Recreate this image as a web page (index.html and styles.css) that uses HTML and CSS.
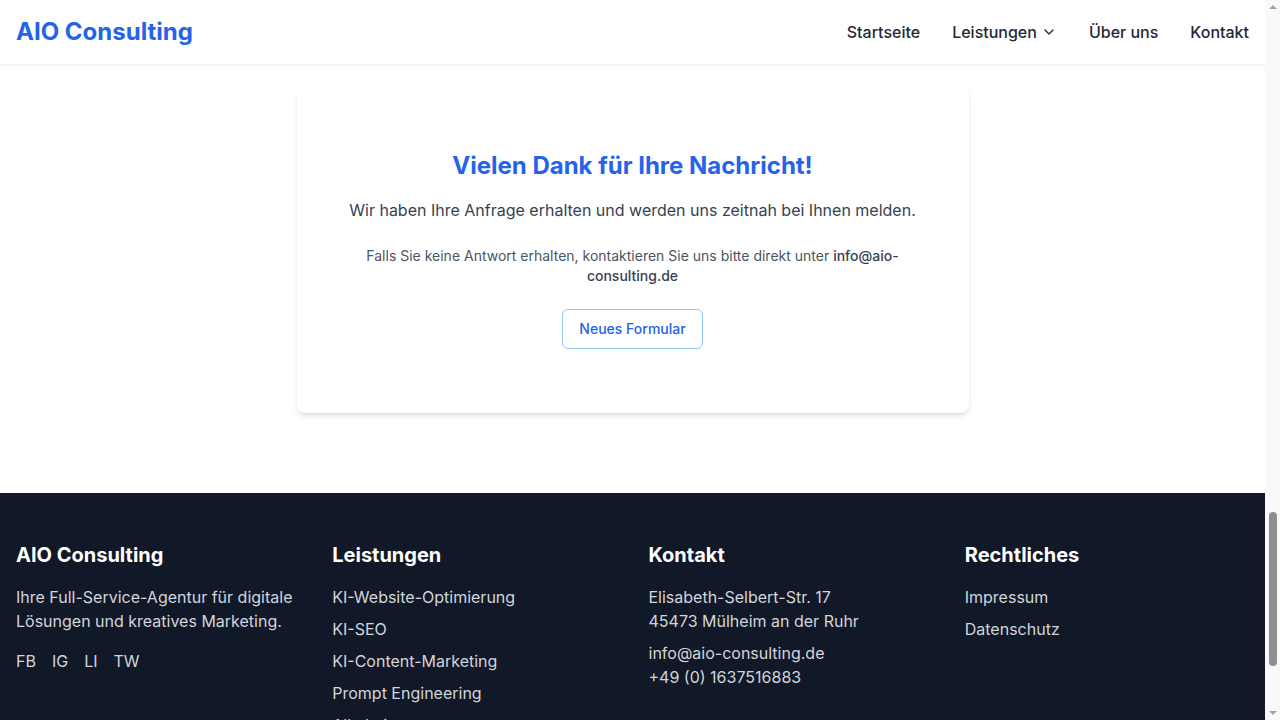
FILE: index.html
```html
<!DOCTYPE html>
<html lang="de">
<head>
<meta charset="utf-8">
<title>AIO Consulting – Kontakt</title>
<link rel="stylesheet" href="styles.css">
</head>
<body>
<header class="site-header">
  <div class="header-inner">
    <a class="logo" href="#">AIO Consulting</a>
    <nav class="main-nav">
      <a href="#">Startseite</a>
      <a href="#" class="has-sub">Leistungen
        <svg class="chev" width="16" height="16" viewBox="0 0 24 24" fill="none" stroke="currentColor" stroke-width="2" stroke-linecap="round" stroke-linejoin="round"><path d="M6 9l6 6 6-6"/></svg>
      </a>
      <a href="#">Über uns</a>
      <a href="#">Kontakt</a>
    </nav>
  </div>
</header>

<main class="main">
  <div class="card">
    <h1 class="card-title">Vielen Dank für Ihre Nachricht!</h1>
    <p class="card-lead">Wir haben Ihre Anfrage erhalten und werden uns zeitnah bei Ihnen melden.</p>
    <p class="card-note">Falls Sie keine Antwort erhalten, kontaktieren Sie uns bitte direkt unter <strong>info@aio-consulting.de</strong></p>
    <button class="btn-outline" type="button">Neues Formular</button>
  </div>
</main>

<footer class="site-footer">
  <div class="footer-grid">
    <div class="fcol">
      <h3>AIO Consulting</h3>
      <p class="ftext">Ihre Full-Service-Agentur für digitale Lösungen und kreatives Marketing.</p>
      <div class="social">
        <a href="#">FB</a><a href="#">IG</a><a href="#">LI</a><a href="#">TW</a>
      </div>
    </div>
    <div class="fcol">
      <h3>Leistungen</h3>
      <ul class="flist">
        <li><a href="#">KI-Website-Optimierung</a></li>
        <li><a href="#">KI-SEO</a></li>
        <li><a href="#">KI-Content-Marketing</a></li>
        <li><a href="#">Prompt Engineering</a></li>
        <li><a href="#">Alle Leistungen</a></li>
      </ul>
    </div>
    <div class="fcol">
      <h3>Kontakt</h3>
      <div class="flist">
        <p>Elisabeth-Selbert-Str. 17<br>45473 Mülheim an der Ruhr</p>
        <p>info@aio-consulting.de<br>+49 (0) 1637516883</p>
      </div>
    </div>
    <div class="fcol">
      <h3>Rechtliches</h3>
      <ul class="flist">
        <li><a href="#">Impressum</a></li>
        <li><a href="#">Datenschutz</a></li>
      </ul>
    </div>
  </div>
  <div class="footer-bottom">© 2025 AIO Consulting. Alle Rechte vorbehalten.</div>
</footer>

<div class="fake-scrollbar" aria-hidden="true">
  <span class="sb-up"></span>
  <div class="sb-track"><span class="sb-thumb"></span></div>
  <span class="sb-down"></span>
</div>
</body>
</html>
```

FILE: styles.css
```css
* { box-sizing: border-box; }
html, body { margin: 0; padding: 0; }
body {
  font-family: Inter, "Noto Sans", "Liberation Sans", sans-serif;
  color: #111827;
  background: #ffffff;
  margin-right: 15px;
}
a { text-decoration: none; color: inherit; }

.site-header {
  position: sticky;
  top: 0;
  z-index: 10;
  background: #fff;
  height: 65px;
  border-bottom: 1px solid #f0f1f3;
  box-shadow: 0 1px 2px rgba(0,0,0,0.04);
}
.header-inner {
  height: 64px;
  padding: 0 16px;
  display: flex;
  align-items: center;
  justify-content: space-between;
}
.logo {
  font-size: 24px;
  font-weight: 700;
  color: #2563eb;
  line-height: 32px;
}
.main-nav {
  display: flex;
  align-items: center;
  gap: 32px;
}
.main-nav a {
  font-size: 16px;
  font-weight: 500;
  color: #1f2937;
  line-height: 24px;
  display: flex;
  align-items: center;
}
.main-nav .chev { margin-left: 4px; width: 16px; height: 16px; }

.main {
  padding: 21px 16px 80px;
}
.card {
  width: 672px;
  margin: 0 auto;
  background: #fff;
  border-radius: 8px;
  box-shadow: 0 4px 6px -1px rgba(0,0,0,0.1), 0 2px 4px -2px rgba(0,0,0,0.1);
  padding: 64px 32px;
  text-align: center;
}
.card-title {
  margin: 0 0 16px;
  font-size: 24px;
  line-height: 32px;
  font-weight: 700;
  color: #2563eb;
}
.card-lead {
  margin: 0 0 24px;
  font-size: 16px;
  line-height: 24px;
  color: #374151;
}
.card-note {
  margin: 0 0 23px;
  font-size: 14px;
  line-height: 20px;
  color: #4b5563;
}
.card-note strong { font-weight: 500; color: #374151; }
.btn-outline {
  font-family: inherit;
  font-size: 14px;
  font-weight: 500;
  line-height: 20px;
  color: #2563eb;
  background: #fff;
  border: 1px solid #93c5fd;
  border-radius: 6px;
  padding: 9px 16px;
  cursor: pointer;
}

.site-footer {
  background: #111827;
  color: #fff;
  padding: 48px 16px 32px;
}
.footer-grid {
  display: grid;
  grid-template-columns: repeat(4, 1fr);
  gap: 32px;
}
.fcol h3 {
  margin: 0 0 16px;
  font-size: 20px;
  line-height: 28px;
  font-weight: 700;
  color: #fff;
}
.ftext {
  margin: 0 0 16px;
  font-size: 16px;
  line-height: 24px;
  color: #d1d5db;
}
.social { display: flex; gap: 16px; font-size: 16px; line-height: 24px; color: #d1d5db; }
.flist {
  list-style: none;
  margin: 0;
  padding: 0;
  display: flex;
  flex-direction: column;
  gap: 8px;
  font-size: 16px;
  line-height: 24px;
  color: #d1d5db;
}
.flist p { margin: 0; }
.footer-bottom {
  margin-top: 48px;
  padding-top: 32px;
  border-top: 1px solid #1f2937;
  text-align: center;
  font-size: 14px;
  color: #9ca3af;
  padding-bottom: 80px;
}

/* overlay drawing of the browser's scrollbar */
.fake-scrollbar {
  position: fixed;
  top: 0;
  right: 0;
  width: 15px;
  height: 100vh;
  background: #f9f9f9;
  display: flex;
  flex-direction: column;
  align-items: center;
  z-index: 20;
}
.sb-up, .sb-down {
  width: 0;
  height: 0;
  border-left: 4px solid transparent;
  border-right: 4px solid transparent;
  margin: 5px 0;
}
.sb-up { border-bottom: 4px solid #a3a3a3; }
.sb-down { border-top: 4px solid #a3a3a3; }
.sb-track {
  flex: 1;
  width: 100%;
  display: flex;
  flex-direction: column;
  align-items: center;
  padding-top: 498px;
}
.sb-thumb {
  width: 8px;
  height: 154px;
  border-radius: 4px;
  background: #8f8f8f;
}
```
